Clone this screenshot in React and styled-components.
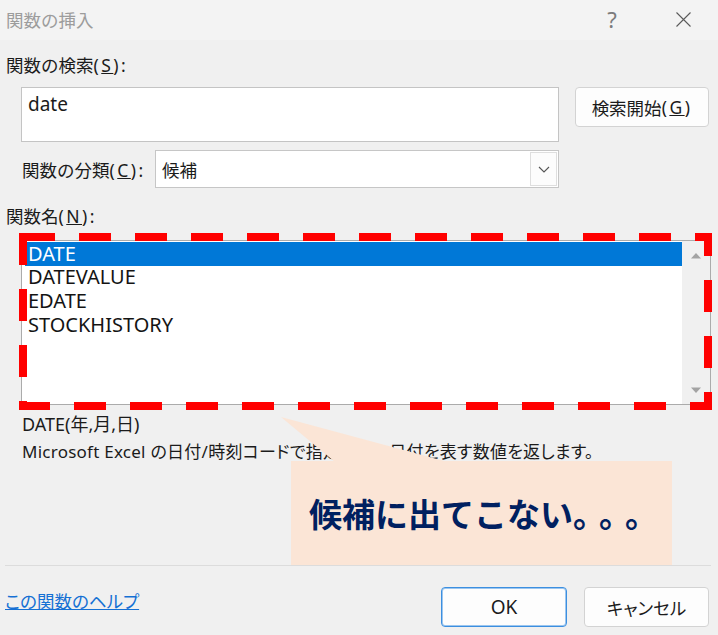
import React from "react";
import styled, { createGlobalStyle } from "styled-components";

const Global = createGlobalStyle`
  html, body { margin: 0; padding: 0; background: #f0f0f0; }
  body { font-family: "Noto Sans", "Noto Sans CJK JP", sans-serif; }
  * { box-sizing: border-box; }
`;

const Window = styled.div`
  position: relative;
  width: 718px;
  height: 635px;
  overflow: hidden;
  background: #f0f0f0;
  color: #1b1b1b;
  display: flex;
  flex-direction: column;
`;

const TitleBar = styled.div`
  height: 40px;
  flex: none;
  background: #f3f3f3;
  display: flex;
  align-items: center;
  padding-left: 6px;
`;

const Title = styled.div`
  flex: 1;
  font-size: 17.5px;
  color: #9c9c9c;
  margin-top: -2px;
`;

const TitleButton = styled.div`
  width: ${(p) => p.$w}px;
  height: 40px;
  display: flex;
  align-items: center;
  justify-content: center;
  color: #7c7c7c;
  font-size: 22px;
  font-weight: 400;
  margin-top: -2px;
`;

const Body = styled.div`
  padding: 13px 0 0 6px;
  display: flex;
  flex-direction: column;
`;

const FieldLabel = styled.div`
  font-size: 17.5px;
  line-height: 24px;
  height: 24px;
  margin-top: ${(p) => p.$mt || 0}px;
  white-space: nowrap;
`;

const Key = styled.span`
  letter-spacing: 2.5px;
`;

const SearchRow = styled.div`
  display: flex;
  align-items: flex-start;
  margin-top: 10px;
  padding-left: 15px;
`;

const SearchBox = styled.div`
  width: 538px;
  height: 55px;
  background: #fff;
  border: 1px solid #c4c4c4;
  padding: 3px 6px;
  font-size: 19px;
  line-height: 26px;
`;

const PushButton = styled.div`
  width: ${(p) => p.$w}px;
  height: 40px;
  margin-left: ${(p) => p.$ml || 0}px;
  background: #fdfdfd;
  border: 1px solid ${(p) => (p.$primary ? "#3c8fe0" : "#d3d3d3")};
  box-shadow: ${(p) => (p.$primary ? "inset 0 0 0 1px #9cc6ef" : "none")};
  border-radius: 4px;
  display: flex;
  align-items: center;
  justify-content: center;
  font-size: ${(p) => p.$fs || 17.5}px;
  font-feature-settings: "palt";
  color: #1b1b1b;
  flex: none;
`;

const CategoryRow = styled.div`
  display: flex;
  align-items: center;
  margin-top: 8px;
  padding-left: 16px;
  height: 38px;
`;

const CategoryLabel = styled.div`
  width: 133px;
  font-size: 17.5px;
  white-space: nowrap;
`;

const Select = styled.div`
  width: 404px;
  height: 38px;
  background: #fff;
  border: 1px solid #c6c6c6;
  display: flex;
  align-items: stretch;
`;

const SelectValue = styled.div`
  flex: 1;
  font-size: 17.5px;
  display: flex;
  align-items: center;
  padding-left: 6px;
`;

const SelectArrow = styled.div`
  width: 27px;
  margin: 1px;
  background: #fcfcfc;
  border: 1px solid #dedede;
  display: flex;
  align-items: center;
  justify-content: center;
`;

const ListBox = styled.div`
  margin-top: 12px;
  margin-left: 15px;
  width: 690px;
  height: 165px;
  background: #fff;
  border: 1px solid #ababab;
  display: flex;
`;

const Items = styled.div`
  flex: 1;
  padding: 1px 0 0 3px;
  display: flex;
  flex-direction: column;
`;

const Item = styled.div`
  height: 23.67px;
  display: flex;
  align-items: center;
  line-height: 1;
  padding-left: 3px;
  font-size: 20px;
  background: ${(p) => (p.$selected ? "#0078d7" : "transparent")};
  color: ${(p) => (p.$selected ? "#ffffff" : "#141414")};
`;

const Scrollbar = styled.div`
  width: 28px;
  background: #f0f0f0;
  display: flex;
  flex-direction: column;
  justify-content: space-between;
  align-items: center;
  padding: 11px 0 10px;
`;

const DescTitle = styled.div`
  margin-top: 7px;
  padding-left: 16px;
  font-size: 18px;
  line-height: 24px;
`;

const DescText = styled.div`
  margin-top: 4px;
  padding-left: 16px;
  font-size: 17px;
  line-height: 24px;
  white-space: nowrap;
  font-feature-settings: "palt";
  letter-spacing: 0.25px;
`;

const Footer = styled.div`
  margin: auto 7px 0 5px;
  height: 70px;
  border-top: 1px solid #dcdcdc;
  display: flex;
  align-items: flex-start;
  padding-top: 21px;
  padding-right: 2px;
`;

const HelpLink = styled.a`
  flex: 1;
  margin-top: 2px;
  font-size: 17.5px;
  line-height: 24px;
  color: #1570d4;
  text-decoration: underline;
  font-feature-settings: "palt";
  cursor: pointer;
`;

const Overlay = styled.svg`
  position: absolute;
  left: 0;
  top: 0;
  pointer-events: none;
`;

const Callout = styled.div`
  position: absolute;
  left: 291px;
  top: 461px;
  width: 381px;
  height: 104px;
  background: #fbe5d6;
  display: flex;
  align-items: center;
  padding-left: 18px;
  font-family: "Noto Sans CJK JP", sans-serif;
  font-weight: 700;
  font-size: 33px;
  color: #002060;
  white-space: nowrap;
  text-spacing-trim: space-all;
`;

const Dots = styled.span`
  letter-spacing: -7px;
`;

const Triangle = ({ up }) => (
  <svg width="12" height="7" viewBox="0 0 12 7">
    <polygon points={up ? "1,6.5 6,1 11,6.5" : "1,0.5 6,6 11,0.5"} fill="#a3a3a3" />
  </svg>
);

const items = ["DATE", "DATEVALUE", "EDATE", "STOCKHISTORY"];

export default function App() {
  return (
    <>
      <Global />
      <Window>
        <TitleBar>
          <Title>関数の挿入</Title>
          <TitleButton $w={72}>?</TitleButton>
          <TitleButton $w={70}>
            <svg width="17" height="17" viewBox="0 0 17 17">
              <path d="M1.5 1.5 L15.5 15.5 M15.5 1.5 L1.5 15.5" stroke="#5a5a5a" strokeWidth="1.1" fill="none" />
            </svg>
          </TitleButton>
        </TitleBar>
        <Body>
          <FieldLabel>
            関数の検索<Key>(<u>S</u>):</Key>
          </FieldLabel>
          <SearchRow>
            <SearchBox>date</SearchBox>
            <PushButton $w={134} $ml={16}>
              検索開始<Key>(<u>G</u>)</Key>
            </PushButton>
          </SearchRow>
          <CategoryRow>
            <CategoryLabel>
              関数の分類<Key>(<u>C</u>):</Key>
            </CategoryLabel>
            <Select>
              <SelectValue>候補</SelectValue>
              <SelectArrow>
                <svg width="12" height="7" viewBox="0 0 12 7">
                  <polyline points="1,1 6,6 11,1" stroke="#555" strokeWidth="1.1" fill="none" />
                </svg>
              </SelectArrow>
            </Select>
          </CategoryRow>
          <FieldLabel $mt={16}>
            関数名<Key>(<u>N</u>):</Key>
          </FieldLabel>
          <ListBox>
            <Items>
              {items.map((it, i) => (
                <Item key={it} $selected={i === 0}>
                  {it}
                </Item>
              ))}
            </Items>
            <Scrollbar>
              <Triangle up />
              <Triangle />
            </Scrollbar>
          </ListBox>
          <DescTitle>DATE(年,月,日)</DescTitle>
          <DescText>Microsoft Excel の日付/時刻コードで指定された日付を表す数値を返します。</DescText>
        </Body>
        <Footer>
          <HelpLink>この関数のヘルプ</HelpLink>
          <PushButton $w={126} $primary $fs={19}>
            OK
          </PushButton>
          <PushButton $w={125} $ml={17}>
            キャンセル
          </PushButton>
        </Footer>
        <Overlay width="718" height="635" viewBox="0 0 718 635">
          <polygon points="281,417 335,462 448,462" fill="#fbe5d6" />
          <rect x="23" y="237" width="685" height="169" fill="none" stroke="#ff0000" strokeWidth="8" strokeDasharray="32 24" />
        </Overlay>
        <Callout>
          候補に出てこない<Dots>。。。</Dots>
        </Callout>
      </Window>
    </>
  );
}
